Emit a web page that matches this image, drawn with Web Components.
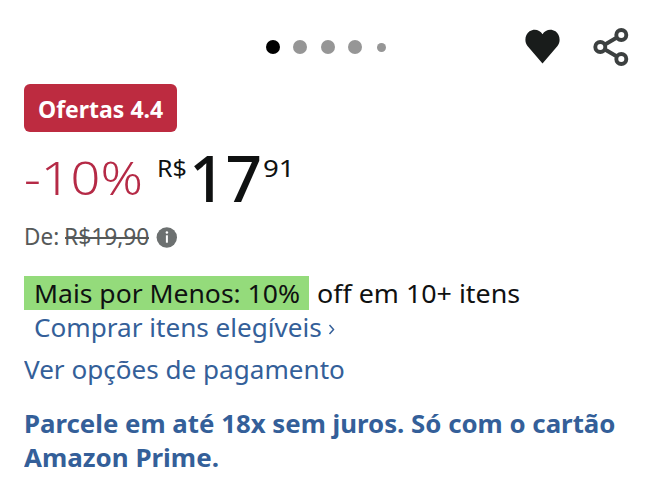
<!DOCTYPE html>
<html lang="pt-BR"><head><meta charset="utf-8"><title>Oferta</title>
<style>html,body{margin:0;background:#fff}body{width:655px;height:500px;overflow:hidden}</style></head>
<body><product-offer></product-offer>
<script>
const FAMILY = '"Noto Sans","Open Sans",sans-serif';
const probe = document.createElement('canvas').getContext('2d');

// One line of text whose visible glyphs fill the width given in "w".
class FitText extends HTMLElement {
  connectedCallback() {
    const size = +this.getAttribute('size'), w = +this.getAttribute('w');
    const weight = this.getAttribute('weight') || 400;
    probe.font = `${weight} ${size}px ${FAMILY}`;
    const m = probe.measureText(this.textContent);
    const k = w / (m.actualBoundingBoxLeft + m.actualBoundingBoxRight);
    this.attachShadow({mode:'open'}).innerHTML = `<style>
      :host{display:block;flex:none;width:${w}px;height:${size}px}
      span{display:block;width:max-content;white-space:nowrap;font:${weight} ${size}px/${size}px ${FAMILY};
        margin-left:${m.actualBoundingBoxLeft * k}px;transform:scaleX(${k});transform-origin:0 0}
      </style><span><slot></slot></span>`;
  }
}
customElements.define('fit-text', FitText);

class GalleryBar extends HTMLElement {
  connectedCallback() {
    this.attachShadow({mode:'open'}).innerHTML = `<style>
      :host{display:flex;align-items:center;height:84px;padding:9px 26px 0 266px;box-sizing:border-box}
      .dots{display:flex;gap:13.3px;align-items:center;margin-top:1px}
      i{width:14px;height:14px;border-radius:50%;background:#969696}
      i:first-child{background:#000}i:last-child{width:9px;height:9px;margin-left:2px}
      svg{display:block}.heart{margin-left:auto}.share{margin-left:33px}
      </style><div class="dots"><i></i><i></i><i></i><i></i><i></i></div>
      <svg class="heart" width="35" height="35" viewBox="0 0 35 35"><path fill="#191c1b" d="M17.500 34.500 2.500 17C-1 12.500 0 5.500 4.500 2.300 9-.8 14.800.6 17.500 5.200 20.200.6 26-.8 30.500 2.300 35 5.500 36 12.500 32.500 17Z"/></svg>
      <svg class="share" width="36" height="38" viewBox="0 0 36 38" fill="none" stroke="#3c4040" stroke-width="3.900"><path d="m12 16.500 11.500-6.700M12 21.500l11.500 6.700"/><circle cx="7.300" cy="19" r="5"/><circle cx="28.300" cy="7" r="5"/><circle cx="28.300" cy="31" r="5"/></svg>`;
  }
}
customElements.define('gallery-bar', GalleryBar);

class ProductOffer extends HTMLElement {
  connectedCallback() {
    this.attachShadow({mode:'open'}).innerHTML = `<style>
      :host{display:flex;flex-direction:column;height:500px;color:#0f1111;background:#fff}
      div{display:flex;align-items:flex-start;box-sizing:border-box;flex:none}
      .badge{width:153px;height:48px;margin-left:24px;padding:14px 0 0 15px;border-radius:6px;background:#bd2b40;color:#fff}
      .price{height:88px;padding:14px 0 0 25px}
      .off{margin:8px 19px 0 0;color:#b52a46}.cur{margin:10px 8px 0 0}.cents{margin:10px 0 0 4px}
      .was{height:56px;padding:5px 0 0 26px;color:#565959}
      .strike{margin-left:8px;position:relative}
      .strike::after{content:"";position:absolute;left:-1px;top:12px;width:84px;height:1.5px;background:#565959}
      .info{margin:2px 0 0 7px}
      .promo{height:34px;padding-left:24px}
      .green{width:285px;height:34px;padding:5px 0 0 12px;background:#94db7b;margin-right:9px}
      .promo>fit-text{margin-top:5px}
      .blue{color:#345f99}
      .shop{height:40px;padding:6px 0 0 35px}.shop svg{margin:8px 0 0 7px}
      .pay{height:50px;padding:8px 0 0 24px}
      .p1{height:44px;padding:12px 0 0 26px}.p2{height:56px;padding:2px 0 0 24px}
      </style>
      <gallery-bar></gallery-bar>
      <div class="badge"><fit-text size="23" weight="700" w="124">Ofertas 4.4</fit-text></div>
      <div class="price"><fit-text class="off" size="46" weight="320" w="115">-10%</fit-text><fit-text class="cur" size="24" w="27">R$</fit-text><fit-text size="63" weight="500" w="66">17</fit-text><fit-text class="cents" size="24" w="25">91</fit-text></div>
      <div class="was"><fit-text size="23.5" w="32">De:</fit-text><fit-text class="strike" size="23.5" w="83">R$19,90</fit-text><svg class="info" width="22" height="22" viewBox="0 0 22 22"><circle cx="10.800" cy="10.500" r="10.200" fill="#6c7070"/><path d="M10.900 8.300v7.400" fill="none" stroke="#fff" stroke-width="2"/><circle cx="10.900" cy="5.500" r="1.250" fill="#fff"/></svg></div>
      <div class="promo"><div class="green"><fit-text size="25" w="263">Mais por Menos: 10%</fit-text></div><fit-text size="25" w="201">off em 10+ itens</fit-text></div>
      <div class="shop blue"><fit-text size="24.5" w="286">Comprar itens elegíveis</fit-text><svg width="8" height="11" viewBox="0 0 8 11" fill="none" stroke="#345f99" stroke-width="1.500"><path d="m1.500 1 4 4.500-4 4.500"/></svg></div>
      <div class="pay blue"><fit-text size="24.5" w="320">Ver opções de pagamento</fit-text></div>
      <div class="p1 blue"><fit-text size="24.5" weight="700" w="589">Parcele em até 18x sem juros. Só com o cartão</fit-text></div>
      <div class="p2 blue"><fit-text size="24.5" weight="700" w="194">Amazon Prime.</fit-text></div>`;
  }
}
customElements.define('product-offer', ProductOffer);
</script></body></html>
